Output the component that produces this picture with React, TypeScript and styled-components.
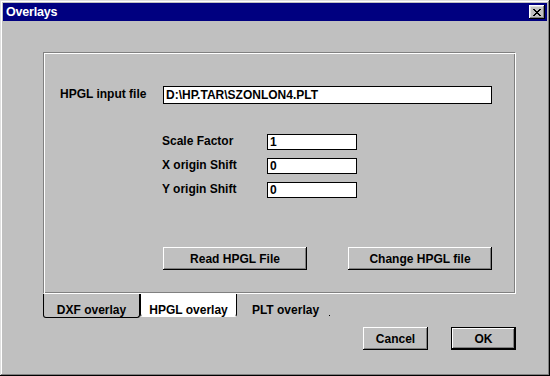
import React from 'react';
import styled, { createGlobalStyle } from 'styled-components';

const GlobalStyle = createGlobalStyle`
  html, body {
    margin: 0;
    padding: 0;
    background: #c0c0c0;
  }
  * {
    box-sizing: border-box;
  }
`;

const Window = styled.div`
  width: 550px;
  height: 376px;
  padding: 3px;
  display: flex;
  flex-direction: column;
  background: #c0c0c0;
  font-family: "Liberation Sans", Arial, sans-serif;
  font-size: 12px;
  font-weight: bold;
  color: #000;
  box-shadow: inset -1px -1px #000, inset 1px 1px #dfdfdf,
    inset -2px -2px #808080, inset 2px 2px #fff;
`;

const TitleBar = styled.div`
  height: 18px;
  display: flex;
  align-items: center;
  justify-content: space-between;
  padding: 0 2px 0 3px;
  background: #000080;
  color: #fff;
`;

const TitleText = styled.span`
  font-size: 12.5px;
  font-weight: bold;
  letter-spacing: -0.2px;
`;

const CloseButton = styled.div`
  width: 16px;
  height: 14px;
  display: flex;
  align-items: center;
  justify-content: center;
  background: #c0c0c0;
  box-shadow: inset -1px -1px #000, inset 1px 1px #fff,
    inset -2px -2px #808080, inset 2px 2px #dfdfdf;
`;

const Body = styled.div`
  flex: 1;
  display: flex;
  flex-direction: column;
  padding: 31px 0 0 40px;
`;

const Panel = styled.div`
  width: 473px;
  height: 242px;
  display: flex;
  flex-direction: column;
  align-items: flex-start;
  padding: 33px 0 0 16px;
  border: 1px solid;
  border-color: #808080 #fff #fff #808080;
  box-shadow: inset 1px 1px #fff, inset -1px -1px #808080;
`;

const Row = styled.div`
  display: flex;
  align-items: center;
`;

const Label = styled.span<{ $width: number }>`
  width: ${p => p.$width}px;
  padding-bottom: 2px;
  white-space: nowrap;
`;

const TextBox = styled.input<{ $width: number; $height: number }>`
  width: ${p => p.$width}px;
  height: ${p => p.$height}px;
  margin: 0;
  padding: 0 0 0 2px;
  border: 1px solid #000;
  border-radius: 0;
  background: #fff;
  color: #000;
  font-family: "Liberation Sans", Arial, sans-serif;
  font-size: 12px;
  font-weight: bold;
  outline: none;
`;

const FieldGroup = styled.div`
  display: flex;
  flex-direction: column;
  gap: 8px;
  margin: 30px 0 0 102px;
`;

const ActionRow = styled.div`
  display: flex;
  gap: 41px;
  margin: 49px 0 0 103px;
`;

const Button = styled.div<{ $width: number; $default?: boolean }>`
  width: ${p => p.$width}px;
  height: 23px;
  display: flex;
  align-items: center;
  justify-content: center;
  background: #c0c0c0;
  ${p =>
    p.$default
      ? `box-shadow: inset 0 0 0 1px #000, inset -2px -2px #000, inset 2px 2px #fff, inset -3px -3px #808080;`
      : `box-shadow: inset -1px -1px #000, inset 1px 1px #fff, inset -2px -2px #808080;`}
`;

const TabStrip = styled.div`
  display: flex;
  align-items: flex-start;
  height: 24px;
`;

const Tab = styled.div<{ $active?: boolean; $bare?: boolean }>`
  position: relative;
  width: 97px;
  height: ${p => (p.$active ? 23 : 24)}px;
  padding-top: 9px;
  text-align: center;
  line-height: 14px;
  white-space: nowrap;
  background: ${p => (p.$active ? '#fff' : 'transparent')};
  border: 1px solid ${p => (p.$bare ? 'transparent' : '#000')};
  border-top: none;
  border-bottom-color: ${p => (p.$active || p.$bare ? 'transparent' : '#000')};
  border-radius: 0 0 3px 3px;
`;

const Speck = styled.span`
  position: absolute;
  right: 3px;
  bottom: 1px;
  width: 1px;
  height: 1px;
  background: #000;
`;

const Footer = styled.div`
  display: flex;
  justify-content: flex-end;
  gap: 23px;
  margin-top: 9px;
  padding-right: 31px;
`;

const CloseGlyph = () => (
  <svg width="8" height="7" viewBox="0 0 8 7" shapeRendering="crispEdges">
    <path
      fill="#000"
      d="M0 0h2v1h-2z M6 0h2v1h-2z M1 1h2v1h-2z M5 1h2v1h-2z M2 2h4v1h-4z M3 3h2v1h-2z M2 4h4v1h-4z M1 5h2v1h-2z M5 5h2v1h-2z M0 6h2v1h-2z M6 6h2v1h-2z"
    />
  </svg>
);

const shifts = [
  { label: 'Scale Factor', value: '1' },
  { label: 'X origin Shift', value: '0' },
  { label: 'Y origin Shift', value: '0' },
];

const App: React.FC = () => {
  return (
    <>
      <GlobalStyle />
      <Window>
        <TitleBar>
          <TitleText>Overlays</TitleText>
          <CloseButton>
            <CloseGlyph />
          </CloseButton>
        </TitleBar>

        <Body>
          <Panel>
            <Row>
              <Label $width={103}>HPGL input file</Label>
              <TextBox $width={329} $height={18} value="D:\HP.TAR\SZONLON4.PLT" readOnly />
            </Row>

            <FieldGroup>
              {shifts.map(s => (
                <Row key={s.label}>
                  <Label $width={105}>{s.label}</Label>
                  <TextBox $width={90} $height={16} value={s.value} readOnly />
                </Row>
              ))}
            </FieldGroup>

            <ActionRow>
              <Button $width={144}>Read HPGL File</Button>
              <Button $width={144}>Change HPGL file</Button>
            </ActionRow>
          </Panel>

          <TabStrip>
            <Tab>DXF overlay</Tab>
            <Tab $active>HPGL overlay</Tab>
            <Tab $bare>
              PLT overlay
              <Speck />
            </Tab>
          </TabStrip>

          <Footer>
            <Button $width={65}>Cancel</Button>
            <Button $width={65} $default>OK</Button>
          </Footer>
        </Body>
      </Window>
    </>
  );
};

export default App;
